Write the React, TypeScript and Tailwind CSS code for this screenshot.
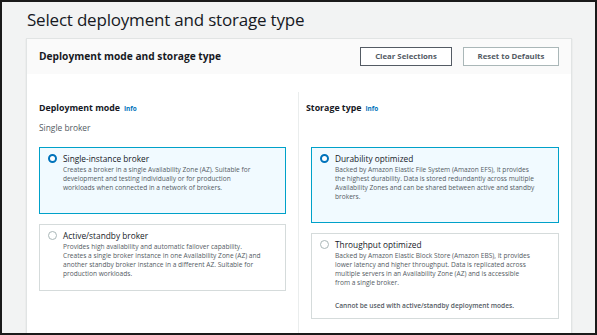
import type { ReactNode } from "react"

interface OptionProps {
    selected?: boolean
    title: string
    lines: string[]
    note?: string
    className?: string
}

function Radio({ selected }: { selected?: boolean }) {
    return selected ? (
        <span className="mt-[1px] box-border block h-[9px] w-[9px] shrink-0 rounded-full border-[2.5px] border-[#0073bb] bg-white" />
    ) : (
        <span className="mt-[1px] box-border block h-[9px] w-[9px] shrink-0 rounded-full border border-[#aab7b8] bg-white" />
    )
}

function Option({ selected, title, lines, note, className }: Readonly<OptionProps>) {
    return (
        <div
            className={
                (selected ? "border-[#00a1c9] bg-[#f1faff] " : "border-[#d5dbdb] bg-white ") +
                "box-border border pl-[8px] pt-[5px] " +
                (className ?? "")
            }
        >
            <div className="flex items-start gap-[6px]">
                <Radio selected={selected} />
                <div>
                    <div className="h-[11px] text-[8.3px] leading-[11px] whitespace-nowrap text-[#16191f]">{title}</div>
                    <div className="mt-[1px] text-[6.6px] leading-[9px] whitespace-nowrap text-[#545b64]">
                        {lines.map(line => (
                            <div key={line}>{line}</div>
                        ))}
                    </div>
                    {note && (
                        <div className="mt-[14px] text-[6.6px] leading-[9px] font-semibold whitespace-nowrap text-[#545b64]">
                            {note}
                        </div>
                    )}
                </div>
            </div>
        </div>
    )
}

function Label({ children }: { children: ReactNode }) {
    return (
        <div className="flex h-[12px] items-baseline leading-[12px] whitespace-nowrap">
            <span className="text-[8.8px] font-bold text-[#16191f]">{children}</span>
            <span className="ml-[4px] text-[6.4px] font-bold text-[#0073bb]">Info</span>
        </div>
    )
}

export default function App() {
    return (
        <div className="box-border h-[335px] w-[597px] overflow-hidden border-2 border-[#1a1a1a] bg-[#f2f3f3] font-['Open_Sans',sans-serif]">
            <h1 className="ml-[25px] mt-[4px] h-[28px] text-[17px] leading-[28px] tracking-[-0.2px] whitespace-nowrap text-[#16191f]">
                Select deployment and storage type
            </h1>

            <div className="ml-[24px] mr-[23px] mt-[4px] h-[320px] border border-[#e1e4e4] bg-white shadow-[0_1px_1px_rgba(0,28,36,0.15)]">
                <div className="flex h-[35px] items-center justify-between bg-[#fafafa] pl-[12px] pr-[12px]">
                    <h2 className="text-[10.2px] font-bold whitespace-nowrap text-[#16191f]">
                        Deployment mode and storage type
                    </h2>
                    <div className="flex gap-[11px]">
                        <button className="box-border h-[19px] w-[92px] border border-[#545b64] bg-white text-[7.8px] font-bold text-[#545b64]">
                            Clear Selections
                        </button>
                        <button className="box-border h-[19px] w-[96px] border border-[#aab7b8] bg-white text-[7.8px] font-bold text-[#545b64]">
                            Reset to Defaults
                        </button>
                    </div>
                </div>

                <div className="flex pt-[18px]">
                    <div className="box-border h-[260px] w-[272px] border-r border-[#eaeded] pl-[12px] pr-[12px] pt-[10px]">
                        <Label>Deployment mode</Label>
                        <div className="mt-[8px] h-[12px] text-[8.4px] leading-[12px] text-[#545b64]">Single broker</div>
                        <Option
                            selected
                            className="mt-[13px] h-[67px]"
                            title="Single-instance broker"
                            lines={[
                                "Creates a broker in a single Availability Zone (AZ). Suitable for",
                                "development and testing individually or for production",
                                "workloads when connected in a network of brokers.",
                            ]}
                        />
                        <Option
                            className="mt-[10px] h-[67px]"
                            title="Active/standby broker"
                            lines={[
                                "Provides high availability and automatic failover capability.",
                                "Creates a single broker instance in one Availability Zone (AZ) and",
                                "another standby broker instance in a different AZ. Suitable for",
                                "production workloads.",
                            ]}
                        />
                    </div>

                    <div className="pl-[7px] pt-[10px]">
                        <Label>Storage type</Label>
                        <div className="ml-[5px] w-[248px]">
                            <Option
                                selected
                                className="mt-[33px] h-[76px]"
                                title="Durability optimized"
                                lines={[
                                    "Backed by Amazon Elastic File System (Amazon EFS), it provides",
                                    "the highest durability. Data is stored redundantly across multiple",
                                    "Availability Zones and can be shared between active and standby",
                                    "brokers.",
                                ]}
                            />
                            <Option
                                className="mt-[10px] h-[86px]"
                                title="Throughput optimized"
                                lines={[
                                    "Backed by Amazon Elastic Block Store (Amazon EBS), it provides",
                                    "lower latency and higher throughput. Data is replicated across",
                                    "multiple servers in an Availability Zone (AZ) and is accessible",
                                    "from a single broker.",
                                ]}
                                note="Cannot be used with active/standby deployment modes."
                            />
                        </div>
                    </div>
                </div>
            </div>
        </div>
    )
}
